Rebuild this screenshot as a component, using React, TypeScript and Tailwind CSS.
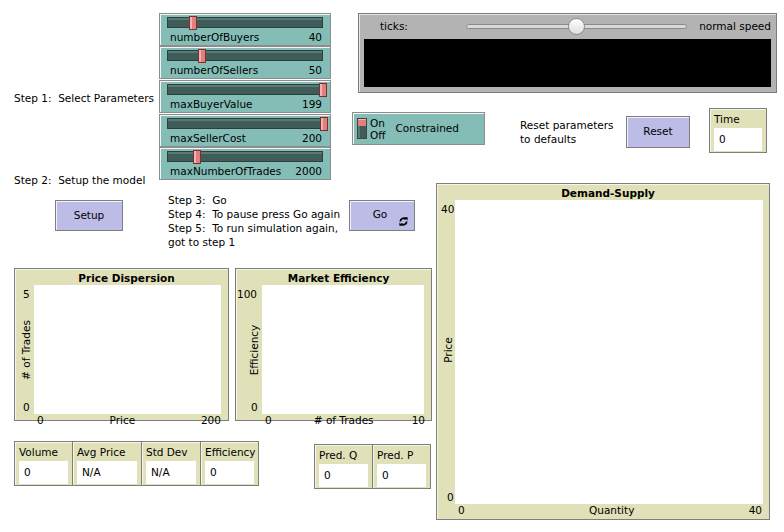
import React from "react";

const font = { fontFamily: '"DejaVu Sans", "Liberation Sans", sans-serif' };

type SliderProps = {
  pos: string;
  label: string;
  value: string;
  handle: string;
};

function Slider({ pos, label, value, handle }: SliderProps) {
  return (
    <div
      className={`absolute ${pos} w-[172px] h-[33px] bg-[#83bdb6] border border-[#8d8d8d] shadow-[inset_1px_1px_0_#f4f4f4]`}
    >
      <div className="relative mx-[7px] mt-[3px] h-[11px] bg-[#3f5c59] border border-[#2c3f3d] shadow-[inset_0_2px_0_#5b7a77]">
        <div
          className={`absolute ${handle} top-[-2px] w-[8px] h-[14px] bg-[#e27e7e] border border-[#7a3030] shadow-[inset_2px_0_0_#f3b3b3]`}
        />
      </div>
      <div className="flex justify-between pl-[10px] pr-[8px] mt-[3px] leading-[13px] text-black">
        <span>{label}</span>
        <span>{value}</span>
      </div>
    </div>
  );
}

type MonitorProps = {
  pos: string;
  label: string;
  value: string;
};

function Monitor({ pos, label, value }: MonitorProps) {
  return (
    <div
      className={`absolute ${pos} h-[45px] bg-[#e1e1b9] border border-[#7e7e7e] shadow-[inset_1px_1px_0_#f6f6e6] px-[4px] text-black`}
    >
      <div className="leading-[13px] pt-[4px]">{label}</div>
      <div className="mt-[2px] h-[23px] bg-white pl-[5px] leading-[23px]">{value}</div>
    </div>
  );
}

function GoIcon() {
  return (
    <svg width="9" height="9" viewBox="0 0 10 10">
      <path d="M1.5 5 A3.5 3.5 0 0 1 7.6 2.6" fill="none" stroke="#000" strokeWidth="2" />
      <path d="M6 0.4 L9.6 0.4 L9.6 4 Z" fill="#000" />
      <path d="M8.5 5 A3.5 3.5 0 0 1 2.4 7.4" fill="none" stroke="#000" strokeWidth="2" />
      <path d="M4 9.6 L0.4 9.6 L0.4 6 Z" fill="#000" />
    </svg>
  );
}

export default function App() {
  return (
    <div className="relative w-[784px] h-[532px] bg-white overflow-hidden text-[10.5px] text-black" style={font}>
      <Slider pos="left-[159px] top-[13px]" label="numberOfBuyers" value="40" handle="left-[21px]" />
      <Slider pos="left-[159px] top-[46px]" label="numberOfSellers" value="50" handle="left-[30px]" />
      <Slider pos="left-[159px] top-[80px]" label="maxBuyerValue" value="199" handle="left-[151px]" />
      <Slider pos="left-[159px] top-[114px]" label="maxSellerCost" value="200" handle="left-[152px]" />
      <Slider pos="left-[159px] top-[147px]" label="maxNumberOfTrades" value="2000" handle="left-[25px]" />

      {/* view */}
      <div className="absolute left-[358px] top-[13px] w-[419px] h-[80px] bg-[#b3b3b3] border border-[#7c7c7c] shadow-[inset_1px_1px_0_#e6e6e6] px-[5px] pb-[5px] flex flex-col">
        <div className="h-[25px] flex items-center">
          <span className="pl-[16px] w-[102px]">ticks:</span>
          <div className="relative w-[221px] h-[5px] rounded-full bg-[#d9d9d9] border border-[#8a8a8a]">
            <div className="absolute left-[101px] top-[-7px] w-[17px] h-[17px] rounded-full bg-gradient-to-b from-white to-[#dedede] border border-[#8a8a8a]" />
          </div>
          <span className="ml-auto">normal speed</span>
        </div>
        <div className="flex-1 bg-black" />
      </div>

      <div className="absolute left-[14px] top-[91px] leading-[14px] whitespace-pre">Step 1:  Select Parameters</div>
      <div className="absolute left-[14px] top-[173px] leading-[14px] whitespace-pre">Step 2:  Setup the model</div>

      {/* switch */}
      <div className="absolute left-[352px] top-[112px] w-[133px] h-[33px] bg-[#83bdb6] border border-[#8d8d8d] shadow-[inset_1px_1px_0_#f4f4f4] flex items-center">
        <div className="ml-[4px] flex flex-col w-[10px] h-[21px] border border-[#444]">
          <div className="h-[7px] bg-[#e27e7e] shadow-[inset_0_1px_0_#f3b3b3]" />
          <div className="flex-1 bg-[#3f5c59] shadow-[inset_2px_0_0_#5b7a77]" />
        </div>
        <div className="ml-[3px] flex flex-col leading-[12px]">
          <span>On</span>
          <span>Off</span>
        </div>
        <span className="ml-[10px]">Constrained</span>
      </div>

      <div className="absolute left-[520px] top-[118px] leading-[14px]">
        <div>Reset parameters</div>
        <div>to defaults</div>
      </div>

      <div className="absolute left-[626px] top-[116px] w-[64px] h-[32px] bg-[#bcbce6] border border-[#7e7e7e] shadow-[inset_1px_1px_0_#f0f0ff] flex items-center justify-center">
        Reset
      </div>

      <Monitor pos="left-[709px] top-[108px] w-[58px] h-[44px]" label="Time" value="0" />

      <div className="absolute left-[55px] top-[200px] w-[68px] h-[31px] bg-[#bcbce6] border border-[#7e7e7e] shadow-[inset_1px_1px_0_#f0f0ff] flex items-center justify-center">
        Setup
      </div>

      <div className="absolute left-[168px] top-[193px] leading-[14px] whitespace-pre">
        <div>Step 3:  Go</div>
        <div>Step 4:  To pause press Go again</div>
        <div>Step 5:  To run simulation again,</div>
        <div>got to step 1</div>
      </div>

      <div className="absolute left-[349px] top-[200px] w-[66px] h-[31px] bg-[#bcbce6] border border-[#7e7e7e] shadow-[inset_1px_1px_0_#f0f0ff] flex items-center justify-center">
        <span className="ml-[-4px] mt-[-2px]">Go</span>
        <div className="absolute right-[6px] bottom-[4px] flex">
          <GoIcon />
        </div>
      </div>

      {/* Price Dispersion */}
      <div className="absolute left-[14px] top-[268px] w-[215px] h-[153px] bg-[#e1e1b9] border border-[#7e7e7e] shadow-[inset_1px_1px_0_#f6f6e6]">
        <div className="text-center font-bold leading-[14px] pt-[2px] pl-[10px]">Price Dispersion</div>
        <div className="flex h-[129px]">
          <div className="relative w-[19px] h-full">
            <span className="absolute left-[8px] top-[3px] leading-[13px]">5</span>
            <span className="absolute left-[11px] top-[65px] -translate-x-1/2 -translate-y-1/2 -rotate-90 whitespace-nowrap leading-[13px]">
              # of Trades
            </span>
            <span className="absolute left-[8px] bottom-[0px] leading-[13px]">0</span>
          </div>
          <div className="w-[187px] h-full bg-white" />
        </div>
        <div className="flex justify-between pl-[22px] pr-[7px] leading-[13px]">
          <span>0</span>
          <span>Price</span>
          <span>200</span>
        </div>
      </div>

      {/* Market Efficiency */}
      <div className="absolute left-[235px] top-[268px] w-[197px] h-[153px] bg-[#e1e1b9] border border-[#7e7e7e] shadow-[inset_1px_1px_0_#f6f6e6]">
        <div className="text-center font-bold leading-[14px] pt-[2px] pl-[10px]">Market Efficiency</div>
        <div className="flex h-[129px]">
          <div className="relative w-[26px] h-full">
            <span className="absolute left-[1px] top-[3px] leading-[13px]">100</span>
            <span className="absolute left-[18px] top-[65px] -translate-x-1/2 -translate-y-1/2 -rotate-90 whitespace-nowrap leading-[13px]">
              Efficiency
            </span>
            <span className="absolute left-[15px] bottom-[0px] leading-[13px]">0</span>
          </div>
          <div className="w-[162px] h-full bg-white" />
        </div>
        <div className="flex justify-between pl-[29px] pr-[6px] leading-[13px]">
          <span>0</span>
          <span className="ml-[4px]"># of Trades</span>
          <span>10</span>
        </div>
      </div>

      {/* Demand-Supply */}
      <div className="absolute left-[436px] top-[183px] w-[334px] h-[337px] bg-[#e1e1b9] border border-[#7e7e7e] shadow-[inset_1px_1px_0_#f6f6e6]">
        <div className="text-center font-bold leading-[14px] pt-[2px] pl-[10px]">Demand-Supply</div>
        <div className="flex h-[304px]">
          <div className="relative w-[18px] h-full">
            <span className="absolute left-[4px] top-[3px] leading-[13px]">40</span>
            <span className="absolute left-[11px] top-[150px] -translate-x-1/2 -translate-y-1/2 -rotate-90 whitespace-nowrap leading-[13px]">
              Price
            </span>
            <span className="absolute left-[10px] bottom-[0px] leading-[13px]">0</span>
          </div>
          <div className="w-[308px] h-full bg-white" />
        </div>
        <div className="flex justify-between pl-[21px] pr-[7px] leading-[13px]">
          <span>0</span>
          <span className="ml-[10px]">Quantity</span>
          <span>40</span>
        </div>
      </div>

      <Monitor pos="left-[14px] top-[441px] w-[59px]" label="Volume" value="0" />
      <Monitor pos="left-[72px] top-[441px] w-[70px]" label="Avg Price" value="N/A" />
      <Monitor pos="left-[141px] top-[441px] w-[60px]" label="Std Dev" value="N/A" />
      <Monitor pos="left-[200px] top-[441px] w-[59px]" label="Efficiency" value="0" />

      <Monitor pos="left-[314px] top-[444px] w-[59px]" label="Pred. Q" value="0" />
      <Monitor pos="left-[372px] top-[444px] w-[59px]" label="Pred. P" value="0" />
    </div>
  );
}
